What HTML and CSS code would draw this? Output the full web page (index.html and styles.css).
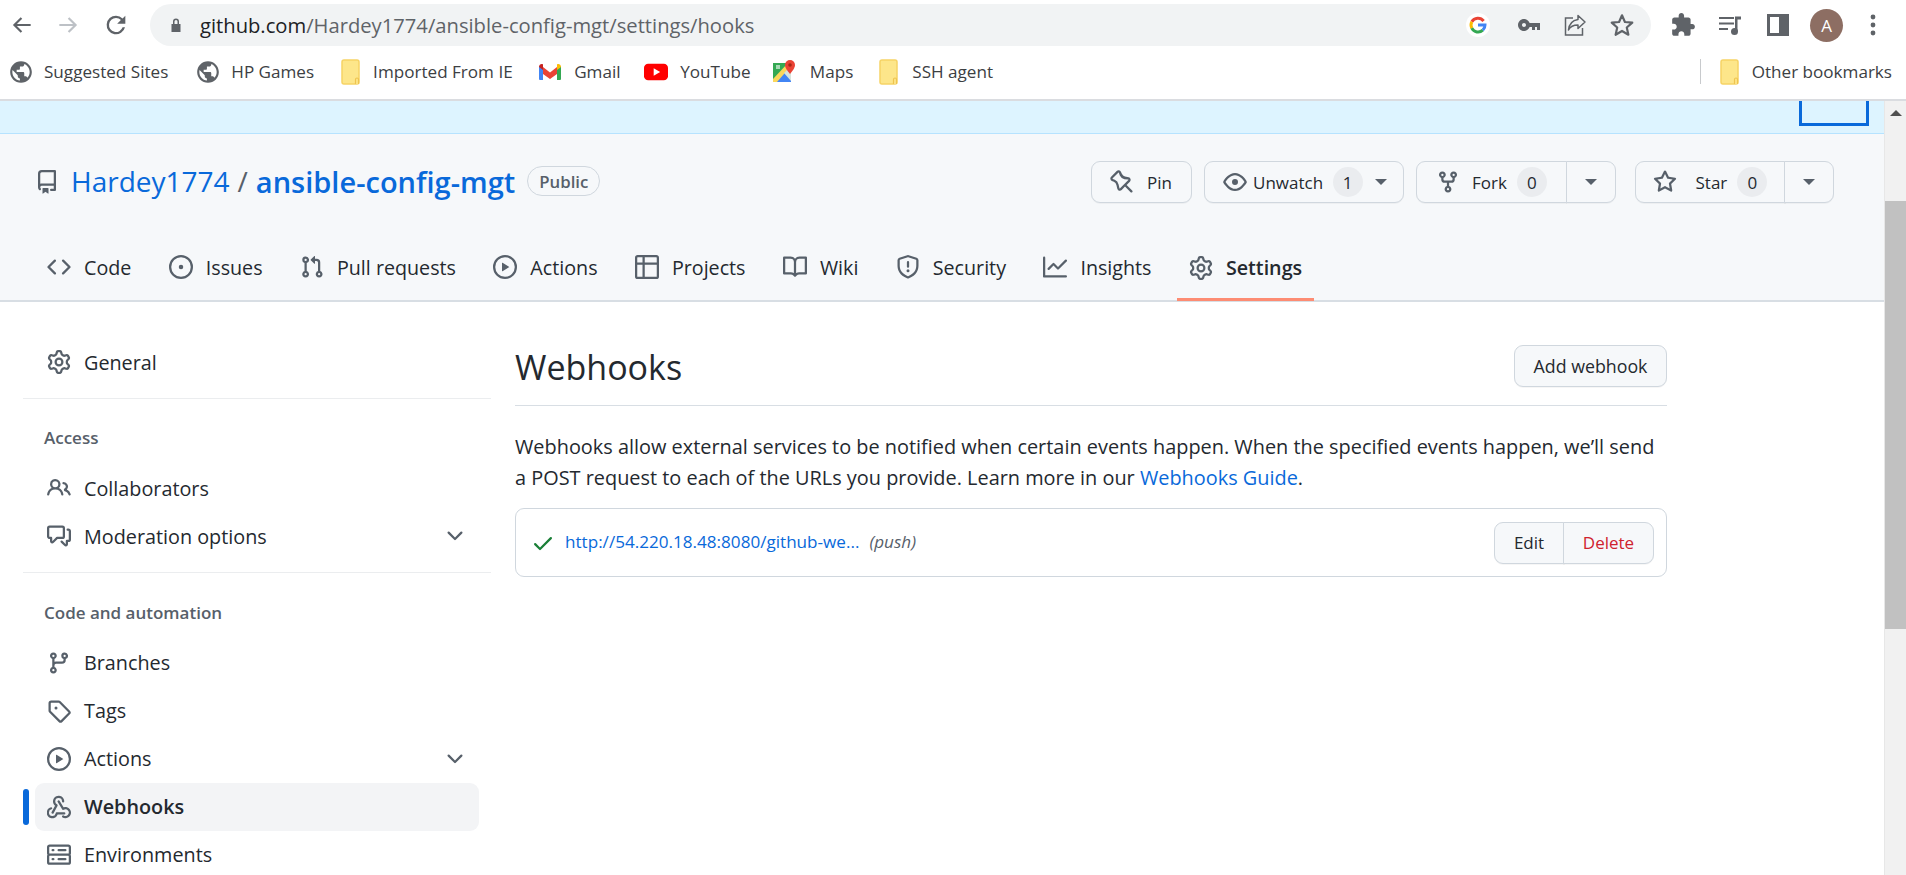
FILE: index.html
```html
<!DOCTYPE html>
<html lang="en">
<head>
  <meta charset="UTF-8">
  <title>Webhooks · Hardey1774/ansible-config-mgt</title>
  <link rel="stylesheet" href="styles.css">
</head>
<body>
  <svg class="sprite" xmlns="http://www.w3.org/2000/svg">
    <symbol id="i-repo" viewBox="0 0 16 16"><path d="M2 2.5A2.5 2.5 0 014.5 0h8.75a.75.75 0 01.75.75v12.5a.75.75 0 01-.75.75h-2.5a.75.75 0 110-1.5h1.75v-2h-8a1 1 0 00-.714 1.7.75.75 0 01-1.072 1.05A2.495 2.495 0 012 11.5v-9zm10.5-1V9h-8c-.356 0-.694.074-1 .208V2.5a1 1 0 011-1h8zM5 12.25v3.25a.25.25 0 00.4.2l1.45-1.087a.25.25 0 01.3 0L8.6 15.7a.25.25 0 00.4-.2v-3.25a.25.25 0 00-.25-.25h-3.5a.25.25 0 00-.25.25z"/></symbol>
    <symbol id="i-code" viewBox="0 0 16 16"><path d="M4.72 3.22a.75.75 0 011.06 1.06L2.06 8l3.72 3.72a.75.75 0 11-1.06 1.06L.47 8.53a.75.75 0 010-1.06l4.25-4.25zm6.56 0a.75.75 0 10-1.06 1.06L13.94 8l-3.72 3.72a.75.75 0 101.06 1.06l4.25-4.25a.75.75 0 000-1.06l-4.25-4.25z"/></symbol>
    <symbol id="i-issue" viewBox="0 0 16 16"><path d="M8 9.5a1.5 1.5 0 100-3 1.5 1.5 0 000 3z"/><path d="M8 0a8 8 0 100 16A8 8 0 008 0zM1.5 8a6.5 6.5 0 1113 0 6.5 6.5 0 01-13 0z"/></symbol>
    <symbol id="i-pull" viewBox="0 0 16 16"><path d="M7.177 3.073L9.573.677A.25.25 0 0110 .854v4.792a.25.25 0 01-.427.177L7.177 3.427a.25.25 0 010-.354zM3.75 2.5a.75.75 0 100 1.5.75.75 0 000-1.5zm-2.25.75a2.25 2.25 0 113 2.122v5.256a2.251 2.251 0 11-1.5 0V5.372A2.25 2.25 0 011.5 3.25zM11 2.5h-1V4h1a1 1 0 011 1v5.628a2.251 2.251 0 101.5 0V5A2.5 2.5 0 0011 2.5zm1 10.25a.75.75 0 111.5 0 .75.75 0 01-1.5 0zM3.75 12a.75.75 0 100 1.5.75.75 0 000-1.5z"/></symbol>
    <symbol id="i-play" viewBox="0 0 16 16"><path d="M1.5 8a6.5 6.5 0 1113 0 6.5 6.5 0 01-13 0zM8 0a8 8 0 100 16A8 8 0 008 0zM6.379 5.227A.25.25 0 006 5.442v5.117a.25.25 0 00.379.214l4.264-2.559a.25.25 0 000-.428L6.379 5.227z"/></symbol>
    <symbol id="i-table" viewBox="0 0 16 16"><path d="M0 1.75C0 .784.784 0 1.75 0h12.5C15.216 0 16 .784 16 1.75v12.5A1.75 1.75 0 0114.25 16H1.75A1.75 1.75 0 010 14.25V1.75zM1.5 6.5v7.75c0 .138.112.25.25.25H5v-8H1.5zM5 5H1.5V1.75a.25.25 0 01.25-.25H5V5zm1.5 1.5v8h7.75a.25.25 0 00.25-.25V6.5h-8zm8-1.5h-8V1.5h7.75a.25.25 0 01.25.25V5z"/></symbol>
    <symbol id="i-book" viewBox="0 0 16 16"><path d="M0 1.75A.75.75 0 01.75 1h4.253c1.227 0 2.317.59 3 1.501A3.744 3.744 0 0111.006 1h4.245a.75.75 0 01.75.75v10.5a.75.75 0 01-.75.75h-4.507a2.25 2.25 0 00-1.591.659l-.622.621a.75.75 0 01-1.06 0l-.622-.621A2.25 2.25 0 005.258 13H.75a.75.75 0 01-.75-.75V1.75zm8.755 3a2.25 2.25 0 012.25-2.25H14.5v9h-3.757c-.71 0-1.4.201-1.992.572l.004-7.322zm-1.504 7.324l.004-5.073-.002-2.253A2.25 2.25 0 005.003 2.5H1.5v9h3.757a3.75 3.75 0 011.994.574z"/></symbol>
    <symbol id="i-shield" viewBox="0 0 16 16"><path d="M7.467.133a1.75 1.75 0 011.066 0l5.25 1.68A1.75 1.75 0 0115 3.48V7c0 1.566-.32 3.182-1.303 4.682-.983 1.498-2.585 2.813-5.032 3.855a1.7 1.7 0 01-1.33 0c-2.447-1.042-4.049-2.357-5.032-3.855C1.32 10.182 1 8.566 1 7V3.48a1.75 1.75 0 011.217-1.667l5.25-1.68zm.61 1.429a.25.25 0 00-.153 0l-5.25 1.68a.25.25 0 00-.174.238V7c0 1.358.275 2.666 1.057 3.86.784 1.194 2.121 2.34 4.366 3.297a.2.2 0 00.154 0c2.245-.956 3.582-2.104 4.366-3.298C13.225 9.666 13.5 8.36 13.5 7V3.48a.25.25 0 00-.174-.237l-5.25-1.68zM9 10.5a1 1 0 11-2 0 1 1 0 012 0zm-.25-5.75a.75.75 0 10-1.5 0v3a.75.75 0 001.5 0v-3z"/></symbol>
    <symbol id="i-graph" viewBox="0 0 16 16"><path d="M1.5 1.75a.75.75 0 00-1.5 0v12.5c0 .414.336.75.75.75h14.5a.75.75 0 000-1.5H1.5V1.75zm14.28 2.53a.75.75 0 00-1.06-1.06L10 7.94 7.53 5.47a.75.75 0 00-1.06 0L3.22 8.72a.75.75 0 001.06 1.06L7 7.06l2.47 2.47a.75.75 0 001.06 0l5.25-5.25z"/></symbol>
    <symbol id="i-gear" viewBox="0 0 16 16"><path d="M7.429 1.525a6.593 6.593 0 011.142 0c.036.003.108.036.137.146l.289 1.105c.147.56.55.967.997 1.189.174.086.341.183.501.29.417.278.97.423 1.53.27l1.102-.303c.11-.03.175.016.195.046.219.31.41.641.573.989.014.031.022.11-.059.19l-.815.806c-.411.406-.562.957-.53 1.456a4.588 4.588 0 010 .582c-.032.499.119 1.05.53 1.456l.815.806c.08.08.073.159.059.19a6.494 6.494 0 01-.573.99c-.02.029-.086.074-.195.045l-1.103-.303c-.559-.153-1.112-.008-1.529.27-.16.107-.327.204-.5.29-.449.222-.851.628-.998 1.189l-.289 1.105c-.029.11-.101.143-.137.146a6.613 6.613 0 01-1.142 0c-.036-.003-.108-.037-.137-.146l-.289-1.105c-.147-.56-.55-.967-.997-1.189a4.502 4.502 0 01-.501-.29c-.417-.278-.97-.423-1.53-.27l-1.102.303c-.11.03-.175-.016-.195-.046a6.492 6.492 0 01-.573-.989c-.014-.031-.022-.11.059-.19l.815-.806c.411-.406.562-.957.53-1.456a4.587 4.587 0 010-.582c.032-.499-.119-1.05-.53-1.456l-.815-.806c-.08-.08-.073-.159-.059-.19a6.44 6.44 0 01.573-.99c.02-.029.086-.075.195-.045l1.103.303c.559.153 1.112.008 1.529-.27.16-.107.327-.204.5-.29.449-.222.851-.628.998-1.189l.289-1.105c.029-.11.101-.143.137-.146zM8 0c-.236 0-.47.01-.701.03-.743.065-1.29.615-1.458 1.261l-.29 1.106c-.017.066-.078.158-.211.224a5.994 5.994 0 00-.668.386c-.123.082-.233.09-.3.071L3.27 2.776c-.644-.177-1.392.02-1.82.63a7.977 7.977 0 00-.704 1.217c-.315.675-.111 1.422.363 1.891l.815.806c.05.048.098.147.088.294a6.084 6.084 0 000 .772c.01.147-.038.246-.088.294l-.815.806c-.474.469-.678 1.216-.363 1.891.2.428.436.835.704 1.218.428.609 1.176.806 1.82.63l1.103-.303c.066-.019.176-.011.299.071.213.143.436.272.668.386.133.066.194.158.212.224l.289 1.106c.169.646.715 1.196 1.458 1.26a8.094 8.094 0 001.402 0c.743-.064 1.29-.614 1.458-1.26l.29-1.106c.017-.066.078-.158.211-.224a5.98 5.98 0 00.668-.386c.123-.082.233-.09.3-.071l1.102.302c.644.177 1.392-.02 1.82-.63.268-.382.505-.789.704-1.217.315-.675.111-1.422-.364-1.891l-.814-.806c-.05-.048-.098-.147-.088-.294a6.1 6.1 0 000-.772c-.01-.147.039-.246.088-.294l.814-.806c.475-.469.679-1.216.364-1.891a7.992 7.992 0 00-.704-1.218c-.428-.609-1.176-.806-1.82-.63l-1.103.303c-.066.019-.176.011-.299-.071a5.991 5.991 0 00-.668-.386c-.133-.066-.194-.158-.212-.224L10.16 1.29C9.99.645 9.444.095 8.701.031A8.094 8.094 0 008 0zm1.5 8a1.5 1.5 0 11-3 0 1.5 1.5 0 013 0zM11 8a3 3 0 11-6 0 3 3 0 016 0z"/></symbol>
    <symbol id="i-pin" viewBox="0 0 16 16"><path d="M4.456.734a1.75 1.75 0 012.826.504l.613 1.327a3.081 3.081 0 002.084 1.707l2.454.584c1.332.317 1.8 1.972.832 2.94L11.06 10l3.72 3.72a.75.75 0 11-1.061 1.06L10 11.06l-2.204 2.205c-.968.968-2.623.5-2.94-.832l-.584-2.454a3.081 3.081 0 00-1.707-2.084l-1.327-.613a1.75 1.75 0 01-.504-2.826L4.456.734zM5.92 1.866a.25.25 0 00-.404-.072L1.794 5.516a.25.25 0 00.072.404l1.328.613A4.582 4.582 0 015.73 9.63l.584 2.454a.25.25 0 00.42.12l5.47-5.47a.25.25 0 00-.12-.42L9.63 6.13a4.581 4.581 0 01-3.098-2.537L5.92 1.866z"/></symbol>
    <symbol id="i-eye" viewBox="0 0 16 16"><path d="M1.679 7.932c.412-.621 1.242-1.75 2.366-2.717C5.175 4.242 6.527 3.5 8 3.5c1.473 0 2.824.742 3.955 1.715 1.124.967 1.954 2.096 2.366 2.717a.119.119 0 010 .136c-.412.621-1.242 1.75-2.366 2.717C10.825 11.758 9.473 12.5 8 12.5c-1.473 0-2.824-.742-3.955-1.715C2.92 9.818 2.09 8.69 1.679 8.068a.119.119 0 010-.136zM8 2c-1.981 0-3.67.992-4.933 2.078C1.797 5.169.88 6.423.43 7.1a1.619 1.619 0 000 1.798c.45.678 1.367 1.932 2.637 3.024C4.329 13.008 6.019 14 8 14c1.981 0 3.67-.992 4.933-2.078 1.27-1.091 2.187-2.345 2.637-3.023a1.619 1.619 0 000-1.798c-.45-.678-1.367-1.932-2.637-3.023C11.671 2.992 9.981 2 8 2zm0 8a2 2 0 100-4 2 2 0 000 4z"/></symbol>
    <symbol id="i-fork" viewBox="0 0 16 16"><path d="M5 3.25a.75.75 0 11-1.5 0 .75.75 0 011.5 0zm0 2.122a2.25 2.25 0 10-1.5 0v.878A2.25 2.25 0 005.75 8.5h1.5v2.128a2.251 2.251 0 101.5 0V8.5h1.5a2.25 2.25 0 002.25-2.25v-.878a2.25 2.25 0 10-1.5 0v.878a.75.75 0 01-.75.75h-4.5A.75.75 0 015 6.25v-.878zm3.75 7.378a.75.75 0 11-1.5 0 .75.75 0 011.5 0zm3-8.75a.75.75 0 100-1.5.75.75 0 000 1.5z"/></symbol>
    <symbol id="i-star" viewBox="0 0 16 16"><path d="M8 .25a.75.75 0 01.673.418l1.882 3.815 4.21.612a.75.75 0 01.416 1.279l-3.046 2.97.719 4.192a.75.75 0 01-1.088.791L8 12.347l-3.766 1.98a.75.75 0 01-1.088-.79l.72-4.194L.818 6.374a.75.75 0 01.416-1.28l4.21-.611L7.327.668A.75.75 0 018 .25zm0 2.445L6.615 5.5a.75.75 0 01-.564.41l-3.097.45 2.24 2.184a.75.75 0 01.216.664l-.528 3.084 2.769-1.456a.75.75 0 01.698 0l2.77 1.456-.53-3.084a.75.75 0 01.216-.664l2.24-2.183-3.096-.45a.75.75 0 01-.564-.41L8 2.694v.001z"/></symbol>
    <symbol id="i-people" viewBox="0 0 16 16"><path d="M5.5 3.5a2 2 0 100 4 2 2 0 000-4zM2 5.5a3.5 3.5 0 115.898 2.549 5.507 5.507 0 013.034 4.084.75.75 0 11-1.482.235 4.001 4.001 0 00-7.9 0 .75.75 0 01-1.482-.236A5.507 5.507 0 013.102 8.05 3.49 3.49 0 012 5.5zM11 4a.75.75 0 100 1.5 1.5 1.5 0 01.666 2.844.75.75 0 00-.416.672v.352a.75.75 0 00.574.73c1.2.289 2.162 1.2 2.522 2.372a.75.75 0 101.434-.44 5.01 5.01 0 00-2.56-3.012A3 3 0 0011 4z"/></symbol>
    <symbol id="i-comment" viewBox="0 0 16 16"><path d="M1.5 2.75a.25.25 0 01.25-.25h8.5a.25.25 0 01.25.25v5.5a.25.25 0 01-.25.25h-3.5a.75.75 0 00-.53.22L3.5 11.44V9.25a.75.75 0 00-.75-.75h-1a.25.25 0 01-.25-.25v-5.5zM1.75 1A1.75 1.75 0 000 2.75v5.5C0 9.216.784 10 1.75 10H2v1.543a1.457 1.457 0 002.487 1.03L7.061 10h3.189A1.75 1.75 0 0012 8.25v-5.5A1.75 1.75 0 0010.25 1h-8.5zM14.5 4.75a.25.25 0 00-.25-.25h-.5a.75.75 0 110-1.5h.5c.966 0 1.75.784 1.75 1.75v5.5A1.75 1.75 0 0114.25 12H14v1.543a1.457 1.457 0 01-2.487 1.03L9.22 12.28a.75.75 0 111.06-1.06l2.22 2.22v-2.19a.75.75 0 01.75-.75h1a.25.25 0 00.25-.25v-5.5z"/></symbol>
    <symbol id="i-branch" viewBox="0 0 16 16"><path d="M9.5 3.25a2.25 2.25 0 113 2.122V6A2.5 2.5 0 0110 8.5H6a1 1 0 00-1 1v1.128a2.251 2.251 0 11-1.5 0V5.372a2.25 2.25 0 111.5 0v1.836A2.492 2.492 0 016 7h4a1 1 0 001-1v-.628A2.25 2.25 0 019.5 3.25zm-6 0a.75.75 0 101.5 0 .75.75 0 00-1.5 0zm8.25-.75a.75.75 0 100 1.5.75.75 0 000-1.5zM4.25 12a.75.75 0 100 1.5.75.75 0 000-1.5z"/></symbol>
    <symbol id="i-tag" viewBox="0 0 16 16"><path d="M2.5 7.775V2.75a.25.25 0 01.25-.25h5.025a.25.25 0 01.177.073l6.25 6.25a.25.25 0 010 .354l-5.025 5.025a.25.25 0 01-.354 0l-6.25-6.25a.25.25 0 01-.073-.177zm-1.5 0V2.75C1 1.784 1.784 1 2.75 1h5.025c.464 0 .91.184 1.238.513l6.25 6.25a1.75 1.75 0 010 2.474l-5.026 5.026a1.75 1.75 0 01-2.474 0l-6.25-6.25A1.75 1.75 0 011 7.775zM6 5a1 1 0 100 2 1 1 0 000-2z"/></symbol>
    <symbol id="i-webhook" viewBox="0 0 16 16"><path d="M5.5 4.25a2.25 2.25 0 1 1 4.5 0 .75.75 0 0 0 1.5 0 3.75 3.75 0 1 0-6.14 2.889l-2.272 4.258a.75.75 0 0 0 1.324.706L7 7.25a.75.75 0 0 0-.309-1.015A2.25 2.25 0 0 1 5.5 4.25Z"/><path d="M7.364 3.607a.75.75 0 0 1 1.03.257l2.608 4.349a3.75 3.75 0 1 1-.628 6.785.75.75 0 0 1 .752-1.299 2.25 2.25 0 1 0-.033-3.88.75.75 0 0 1-1.03-.256L7.107 4.636a.75.75 0 0 1 .257-1.03Z"/><path d="M2.75 8.1a.75.75 0 0 1 .2 1.47 2.25 2.25 0 1 0 2.8 2.68.75.75 0 0 1 .75-.75h5a.75.75 0 0 1 0 1.5H7.1A3.75 3.75 0 1 1 2.75 8.1Z"/></symbol>
    <symbol id="i-server" viewBox="0 0 16 16"><path d="M1.75 1h12.5c.966 0 1.75.784 1.75 1.75v4c0 .372-.116.717-.314 1 .198.283.314.628.314 1v4a1.75 1.75 0 01-1.75 1.75H1.75A1.75 1.75 0 010 12.75v-4c0-.372.116-.717.314-1A1.739 1.739 0 010 6.75v-4C0 1.784.784 1 1.75 1zM1.5 2.75v4c0 .138.112.25.25.25h12.5a.25.25 0 00.25-.25v-4a.25.25 0 00-.25-.25H1.75a.25.25 0 00-.25.25zm.25 5.75a.25.25 0 00-.25.25v4c0 .138.112.25.25.25h12.5a.25.25 0 00.25-.25v-4a.25.25 0 00-.25-.25H1.75zM7 4.75A.75.75 0 017.75 4h4.5a.75.75 0 010 1.5h-4.5A.75.75 0 017 4.75zM7.75 10h4.5a.75.75 0 010 1.5h-4.5a.75.75 0 010-1.5zM3 4.75A.75.75 0 013.75 4h.5a.75.75 0 010 1.5h-.5A.75.75 0 013 4.75zM3.75 10h.5a.75.75 0 010 1.5h-.5a.75.75 0 010-1.5z"/></symbol>
    <symbol id="i-check" viewBox="0 0 16 16"><path d="M13.78 4.22a.75.75 0 010 1.06l-7.25 7.25a.75.75 0 01-1.06 0L2.22 9.28a.75.75 0 011.06-1.06L6 10.94l6.72-6.72a.75.75 0 011.06 0z"/></symbol>
    <symbol id="i-chevron" viewBox="0 0 16 16"><path d="M12.78 5.22a.749.749 0 0 1 0 1.06l-4.25 4.25a.749.749 0 0 1-1.06 0L3.22 6.28a.749.749 0 1 1 1.06-1.06L8 8.939l3.72-3.719a.749.749 0 0 1 1.06 0Z"/></symbol>
    <symbol id="i-globe" viewBox="0 0 24 24"><path d="M12 2C6.48 2 2 6.48 2 12s4.48 10 10 10 10-4.48 10-10S17.52 2 12 2zm-1 17.93c-3.95-.49-7-3.85-7-7.93 0-.62.08-1.21.21-1.79L9 15v1c0 1.1.9 2 2 2v1.93zm6.9-2.54c-.26-.81-1-1.39-1.9-1.39h-1v-3c0-.55-.45-1-1-1H8v-2h2c.55 0 1-.45 1-1V7h2c1.1 0 2-.9 2-2v-.41c2.93 1.19 5 4.06 5 7.41 0 2.08-.8 3.97-2.1 5.39z"/></symbol>
    <symbol id="i-folder" viewBox="0 0 20 26"><rect x="1" y="1" width="17" height="24" rx="2" fill="#fde68a" stroke="#f6d365" stroke-width="1.5"/><path d="M14.5 25v-4.5a1.5 1.5 0 0 1 3 0V25" fill="#fde68a" stroke="#eec44f" stroke-width="1.2"/></symbol>
  </svg>

  <header class="toolbar">
    <svg class="tool tool-back" viewBox="0 0 24 24"><path d="M20 12H5M11.5 5.5L5 12l6.5 6.5" fill="none" stroke="#5f6368" stroke-width="2"/></svg>
    <svg class="tool tool-forward" viewBox="0 0 24 24"><path d="M4 12h15M12.5 5.5L19 12l-6.5 6.5" fill="none" stroke="#bdc1c6" stroke-width="2"/></svg>
    <svg class="tool tool-reload" viewBox="0 0 24 24"><path d="M17.65 6.35A7.96 7.96 0 0 0 12 4a8 8 0 1 0 7.73 10h-2.08A6 6 0 1 1 12 6c1.66 0 3.14.69 4.22 1.78L13 11h7V4l-2.35 2.35z" fill="#5f6368"/></svg>
    <div class="omnibox">
      <svg class="lock" viewBox="0 0 12 16"><path d="M3 7V4.5a3 3 0 0 1 6 0V7h1.5v8h-9V7H3zm1.5 0h3V4.5a1.5 1.5 0 0 0-3 0V7z" fill="#5f6368"/></svg>
      <span class="omni-url"><b>github.com</b>/Hardey1774/ansible-config-mgt/settings/hooks</span>
      <svg class="omni-google" viewBox="0 0 24 24">
        <circle cx="12" cy="12" r="12" fill="#fff"/>
        <path d="M17.6 8A7 7 0 0 0 5.8 8.8" fill="none" stroke="#ea4335" stroke-width="3"/>
        <path d="M5.8 8.8a7 7 0 0 0 0 6.4" fill="none" stroke="#fbbc05" stroke-width="3"/>
        <path d="M5.8 15.2a7 7 0 0 0 11 2" fill="none" stroke="#34a853" stroke-width="3"/>
        <path d="M12 12h7a7 7 0 0 1-2.2 5.2" fill="none" stroke="#4285f4" stroke-width="3"/>
      </svg>
      <svg class="omni-icon key" viewBox="0 0 24 24"><path d="M12.65 10C11.83 7.67 9.61 6 7 6c-3.31 0-6 2.69-6 6s2.69 6 6 6c2.61 0 4.83-1.67 5.65-4H15v3h3v-3h2v3h3v-7H12.65zM7 14c-1.1 0-2-.9-2-2s.9-2 2-2 2 .9 2 2-.9 2-2 2z" fill="#5f6368"/></svg>
      <svg class="omni-icon share" viewBox="0 0 24 24"><path d="M10 5H2.5v17h17v-7" fill="none" stroke="#5f6368" stroke-width="1.5"/><path d="M15 2.5l7 6.5-7 6.5V12c-4.5 0-7.500 1-9.500 5 .5-5.500 3.500-9.500 9.500-10.500V2.500z" fill="none" stroke="#5f6368" stroke-width="1.5" stroke-linejoin="round"/></svg>
      <svg class="omni-icon star-outline" viewBox="0 0 24 24"><path d="M12 3l2.700 6.200 6.800.6-5.100 4.500 1.500 6.700L12 17.500 6.100 21l1.500-6.700L2.500 9.800l6.800-.6L12 3z" fill="none" stroke="#5f6368" stroke-width="2" stroke-linejoin="round"/></svg>
    </div>
    <svg class="tool tool-puzzle" viewBox="0 0 24 24"><path d="M20.5 11H19V7c0-1.100-.9-2-2-2h-4V3.500C13 2.120 11.880 1 10.500 1S8 2.120 8 3.500V5H4c-1.100 0-1.990.9-1.990 2v3.800H3.500c1.490 0 2.700 1.210 2.700 2.700s-1.210 2.700-2.700 2.700H2V20c0 1.100.9 2 2 2h3.800v-1.500c0-1.490 1.210-2.700 2.700-2.700 1.490 0 2.700 1.210 2.700 2.700V22H17c1.100 0 2-.9 2-2v-4h1.500c1.380 0 2.500-1.120 2.500-2.500S21.880 11 20.500 11z" fill="#5f6368"/></svg>
    <svg class="tool tool-media" viewBox="0 0 24 24"><path d="M1 5h15M1 10.500h15M1 16h9" fill="none" stroke="#5f6368" stroke-width="2"/><path d="M17 18.500V3.500h6v3h-3.500v12" fill="#5f6368"/><circle cx="16.500" cy="18.500" r="3.500" fill="#5f6368"/></svg>
    <svg class="tool tool-panel" viewBox="0 0 22 22"><path d="M0 0h22v22H0V0zm3 3v16h9V3H3z" fill="#5f6368" fill-rule="evenodd"/></svg>
    <div class="avatar">A</div>
    <svg class="tool tool-dots" viewBox="0 0 6 24"><circle cx="3" cy="4" r="2.4" fill="#5f6368"/><circle cx="3" cy="12" r="2.4" fill="#5f6368"/><circle cx="3" cy="20" r="2.4" fill="#5f6368"/></svg>
  </header>

  <nav class="bookmarks">
    <a class="mark mark-sites"><svg class="mark-icon"><use href="#i-globe"/></svg>Suggested Sites</a>
    <a class="mark mark-hp"><svg class="mark-icon"><use href="#i-globe"/></svg>HP Games</a>
    <a class="mark mark-ie"><svg class="mark-folder"><use href="#i-folder"/></svg>Imported From IE</a>
    <a class="mark mark-gmail">
      <svg class="mark-logo" viewBox="0 0 24 18">
        <path d="M1 17V3l4 3v11H2a1 1 0 0 1-1-1z" fill="#4285f4"/>
        <path d="M23 17V3l-4 3v11h3a1 1 0 0 0 1-1z" fill="#34a853"/>
        <path d="M5 11V4l7 5.500L19 4v7l-7 5-7-5z" fill="#ea4335"/>
        <path d="M1 4c0-2.500 2.500-3.500 4-2.500V7L1 4z" fill="#c5221f"/>
        <path d="M23 4c0-2.500-2.500-3.500-4-2.500V7l4-3z" fill="#fbbc04"/>
      </svg>Gmail</a>
    <a class="mark mark-yt">
      <svg class="mark-logo" viewBox="0 0 26 18"><rect width="26" height="18" rx="4.5" fill="#f00"/><path d="M10.5 5v8l7-4-7-4z" fill="#fff"/></svg>YouTube</a>
    <a class="mark mark-maps">
      <svg class="mark-logo" viewBox="0 0 24 24">
        <path d="M1 3h18v19H1V3z" fill="#34a853"/>
        <path d="M1 22L14 9l5 5v8H1z" fill="#4285f4"/>
        <path d="M1 22v-3L16 3h3v3L5 22H1z" fill="#fbd75b"/>
        <path d="M12 13l7-7v15l-7-8z" fill="#d6e4dc"/>
        <path d="M4 5h4v4H4V5z" fill="#a8dab5"/>
        <path d="M18 0a5 5 0 0 0-5 5c0 3.500 5 9 5 9s5-5.500 5-9a5 5 0 0 0-5-5z" fill="#ea4335"/>
        <circle cx="18" cy="5" r="1.800" fill="#a52714"/>
      </svg>Maps</a>
    <a class="mark mark-ssh"><svg class="mark-folder"><use href="#i-folder"/></svg>SSH agent</a>
    <span class="marks-sep"></span>
    <a class="mark mark-other"><svg class="mark-folder"><use href="#i-folder"/></svg>Other bookmarks</a>
  </nav>

  <div class="viewport">
    <div class="page">
      <div class="banner"><span class="banner-focus"></span></div>

      <section class="repohead">
        <div class="repo-row">
          <svg class="icon repo-icon"><use href="#i-repo"/></svg>
          <a class="repo-owner">Hardey1774</a>
          <span class="repo-slash">/</span>
          <a class="repo-name">ansible-config-mgt</a>
          <span class="repo-public">Public</span>
          <div class="repo-actions">
            <button class="btn btn-pin"><svg class="icon"><use href="#i-pin"/></svg>Pin</button>
            <button class="btn btn-watch"><svg class="icon"><use href="#i-eye"/></svg>Unwatch<span class="counter">1</span><span class="caret"></span></button>
            <div class="btn-pair">
              <button class="btn btn-main"><svg class="icon"><use href="#i-fork"/></svg>Fork<span class="counter">0</span></button>
              <button class="btn btn-drop"><span class="caret"></span></button>
            </div>
            <div class="btn-pair btn-pair-star">
              <button class="btn btn-main"><svg class="icon"><use href="#i-star"/></svg>Star<span class="counter">0</span></button>
              <button class="btn btn-drop"><span class="caret"></span></button>
            </div>
          </div>
        </div>
        <nav class="tabs">
          <a class="tab"><svg class="icon"><use href="#i-code"/></svg>Code</a>
          <a class="tab"><svg class="icon"><use href="#i-issue"/></svg>Issues</a>
          <a class="tab"><svg class="icon"><use href="#i-pull"/></svg>Pull requests</a>
          <a class="tab"><svg class="icon"><use href="#i-play"/></svg>Actions</a>
          <a class="tab"><svg class="icon"><use href="#i-table"/></svg>Projects</a>
          <a class="tab"><svg class="icon"><use href="#i-book"/></svg>Wiki</a>
          <a class="tab"><svg class="icon"><use href="#i-shield"/></svg>Security</a>
          <a class="tab"><svg class="icon"><use href="#i-graph"/></svg>Insights</a>
          <a class="tab tab-active"><svg class="icon"><use href="#i-gear"/></svg>Settings</a>
        </nav>
      </section>

      <div class="settings">
        <aside class="sidebar">
          <a class="side-item"><svg class="icon"><use href="#i-gear"/></svg>General</a>
          <hr class="side-rule">
          <h3 class="side-label">Access</h3>
          <a class="side-item"><svg class="icon"><use href="#i-people"/></svg>Collaborators</a>
          <a class="side-item"><svg class="icon"><use href="#i-comment"/></svg>Moderation options<svg class="icon side-chevron"><use href="#i-chevron"/></svg></a>
          <hr class="side-rule">
          <h3 class="side-label">Code and automation</h3>
          <a class="side-item"><svg class="icon"><use href="#i-branch"/></svg>Branches</a>
          <a class="side-item"><svg class="icon"><use href="#i-tag"/></svg>Tags</a>
          <a class="side-item"><svg class="icon"><use href="#i-play"/></svg>Actions<svg class="icon side-chevron"><use href="#i-chevron"/></svg></a>
          <a class="side-item side-current"><svg class="icon"><use href="#i-webhook"/></svg>Webhooks</a>
          <a class="side-item"><svg class="icon"><use href="#i-server"/></svg>Environments</a>
        </aside>

        <main class="content">
          <div class="content-head">
            <h2>Webhooks</h2>
            <button class="btn btn-add">Add webhook</button>
          </div>
          <p class="intro">Webhooks allow external services to be notified when certain events happen. When the specified events happen, we’ll send a POST request to each of the URLs you provide. Learn more in our <a>Webhooks Guide</a>.</p>
          <div class="hook">
            <svg class="icon hook-check"><use href="#i-check"/></svg>
            <a class="hook-url">http://54.220.18.48:8080/github-we...</a>
            <em class="hook-events">(push)</em>
            <div class="hook-btns">
              <button class="btn btn-edit">Edit</button>
              <button class="btn btn-delete">Delete</button>
            </div>
          </div>
        </main>
      </div>
    </div>

    <div class="scrollbar">
      <div class="scroll-up"></div>
      <div class="scroll-thumb"></div>
    </div>
  </div>
</body>
</html>
```

FILE: styles.css
```css
* { box-sizing: border-box; }
html, body { margin: 0; height: 875px; overflow: hidden; }
body {
  font-family: "Open Sans", "Noto Sans", sans-serif;
  color: #24292f;
  background: #fff;
  display: flex;
  flex-direction: column;
}
.sprite { display: none; }
.icon { width: 24px; height: 24px; fill: #57606a; fill-rule: evenodd; flex: none; }
a { color: inherit; text-decoration: none; }
button { font-family: inherit; }

/* browser top bar */
.toolbar { height: 50px; display: flex; align-items: center; flex: none; }
.tool { flex: none; }
.tool-back { width: 26px; height: 26px; margin-left: 9px; }
.tool-forward { width: 26px; height: 26px; margin-left: 20px; }
.tool-reload { width: 28px; height: 28px; margin-left: 21px; }
.omnibox {
  width: 1501px;
  height: 42px;
  margin-left: 20px;
  background: #f1f3f4;
  border-radius: 21px;
  display: flex;
  align-items: center;
  padding-left: 20px;
}
.lock { width: 12px; height: 16px; flex: none; }
.omni-url { margin-left: 18px; font-size: 20.2px; color: #5f6368; white-space: nowrap; }
.omni-url b { font-weight: 400; color: #202124; }
.omni-google { width: 24px; height: 24px; margin-left: auto; flex: none; }
.omni-icon { flex: none; }
.key { width: 24px; height: 24px; margin-left: 27px; }
.share { width: 24px; height: 24px; margin-left: 22px; }
.star-outline { width: 26px; height: 26px; margin-left: 22px; margin-right: 16px; }
.tool-puzzle { width: 26px; height: 26px; margin-left: 19px; }
.tool-media { width: 24px; height: 24px; margin-left: 22px; }
.tool-panel { width: 22px; height: 22px; margin-left: 25px; }
.avatar {
  width: 33px;
  height: 33px;
  margin-left: 21px;
  border-radius: 50%;
  background: #8d6e63;
  color: #fff;
  font-size: 17px;
  display: flex;
  align-items: center;
  justify-content: center;
  flex: none;
}
.tool-dots { width: 6px; height: 24px; margin-left: 27px; }

.bookmarks {
  height: 51px;
  flex: none;
  display: flex;
  align-items: center;
  padding-bottom: 6px;
  font-size: 17.1px;
  color: #3c4043;
  border-bottom: 2px solid #dadce0;
  white-space: nowrap;
}
.mark { display: flex; align-items: center; }
.mark-icon { width: 26px; height: 26px; fill: #5f6368; margin-right: 10px; flex: none; }
.mark-folder { width: 20px; height: 26px; margin-right: 12px; flex: none; }
.mark-logo { width: 24px; height: 20px; margin-right: 12px; flex: none; }
.mark-sites { margin-left: 8px; }
.mark-hp { margin-left: 27px; }
.mark-ie { margin-left: 27px; }
.mark-gmail { margin-left: 25.5px; }
.mark-yt { margin-left: 23.7px; }
.mark-maps { margin-left: 21.3px; }
.mark-maps .mark-logo { height: 24px; margin-right: 14px; }
.mark-ssh { margin-left: 26px; }
.mark-ssh .mark-folder { margin-right: 13px; }
.marks-sep { width: 1px; height: 25px; background: #c8cacd; margin-left: auto; }
.mark-other { margin-left: 19px; margin-right: 14px; }

/* page area */
.viewport { flex: 1; display: flex; min-height: 0; }
.page { flex: 1; min-width: 0; }
.scrollbar { width: 22px; flex: none; background: #f1f1f1; border-left: 1px solid #e7e7e7; }
.scroll-up {
  width: 0;
  height: 0;
  margin: 9px auto 0;
  border-left: 6px solid transparent;
  border-right: 6px solid transparent;
  border-bottom: 6px solid #505050;
}
.scroll-thumb { height: 428px; margin-top: 85px; background: #c1c1c1; }

.banner {
  height: 33px;
  background: #ddf4ff;
  border-bottom: 1px solid #b6e3ff;
  position: relative;
}
.banner-focus {
  position: absolute;
  left: 1799px;
  top: 0;
  width: 70px;
  height: 25px;
  border: 3px solid #0969da;
  border-top: 0;
}

.repohead { background: #f6f8fa; border-bottom: 2px solid #d8dee4; height: 168px; }
.repo-row { height: 96px; display: flex; align-items: center; padding: 0 50px 0 35px; white-space: nowrap; }
.repo-icon { margin-right: 12px; }
.repo-owner { font-size: 28px; color: #0969da; margin-bottom: 2px; }
.repo-slash { font-size: 28px; color: #57606a; margin: 0 8px 2px; }
.repo-name { font-size: 29px; font-weight: 600; color: #0969da; margin-bottom: 2px; }
.repo-public {
  margin: 0 0 2px 12px;
  height: 30px;
  padding: 0 11px;
  border: 1.5px solid #d0d7de;
  border-radius: 15px;
  font-size: 16.8px;
  font-weight: 600;
  color: #57606a;
  display: flex;
  align-items: center;
}
.repo-actions { margin-left: auto; display: flex; align-items: center; }

.btn {
  height: 42px;
  display: inline-flex;
  align-items: center;
  background: #f6f8fa;
  border: 1.5px solid #d0d7de;
  border-radius: 9px;
  font-size: 17px;
  font-weight: 500;
  color: #24292f;
  padding: 0 16px;
  white-space: nowrap;
  box-shadow: 0 1px 0 rgba(27, 31, 36, .04);
}
.counter {
  min-width: 30px;
  height: 30px;
  border-radius: 15px;
  background: #eaecef;
  font-size: 17px;
  display: inline-flex;
  align-items: center;
  justify-content: center;
  margin-left: 8px;
}
.caret {
  width: 0;
  height: 0;
  border-left: 6px solid transparent;
  border-right: 6px solid transparent;
  border-top: 6px solid #57606a;
}
.btn-pin { width: 101px; gap: 13px; padding: 0 0 0 18px; }
.btn-watch { width: 200px; margin-left: 12px; padding: 0 0 0 18px; }
.btn-watch .icon { margin-right: 6px; }
.btn-watch .counter { margin-left: 9.5px; }
.btn-watch .caret { margin-left: 12px; }
.btn-pair { display: flex; margin-left: 12px; }
.btn-pair-star { margin-left: 19px; }
.btn-main { width: 151px; border-radius: 9px 0 0 9px; padding: 0 0 0 19px; gap: 12px; }
.btn-main .counter { margin-left: -2px; }
.btn-pair-star .btn-main { padding-left: 17px; gap: 19px; }
.btn-pair-star .counter { margin-left: -9px; }
.btn-drop { width: 50px; margin-left: -1.5px; border-radius: 0 9px 9px 0; justify-content: center; padding: 0; }

.tabs { height: 70px; display: flex; gap: 13.4px; padding-left: 35px; }
.tab {
  height: 70px;
  padding: 7px 12px 0;
  display: flex;
  align-items: center;
  gap: 13px;
  font-size: 19.7px;
  white-space: nowrap;
  border-bottom: 3px solid transparent;
}
.tab-active { font-weight: 600; border-bottom-color: #fd8c73; height: 71px; }

.settings { display: flex; padding: 36px 0 0 23px; }

.sidebar { width: 468px; flex: none; }
.side-item {
  height: 48px;
  margin-left: 12px;
  margin-right: 12px;
  padding: 0 12px;
  border-radius: 9px;
  display: flex;
  align-items: center;
  gap: 13px;
  font-size: 19.8px;
  position: relative;
  white-space: nowrap;
}
.side-chevron { margin-left: auto; }
.side-current { background: #f3f4f6; font-weight: 600; }
.side-current::before {
  content: "";
  position: absolute;
  left: -12px;
  top: 6px;
  width: 6px;
  height: 36px;
  border-radius: 3px;
  background: #0969da;
}
.side-rule { border: 0; border-top: 1.5px solid #ebedef; margin: 12px 0 0; }
.side-label {
  margin: 0 0 0 21px;
  height: 65.4px;
  padding-top: 12px;
  display: flex;
  align-items: center;
  font-size: 17px;
  font-weight: 600;
  color: #57606a;
}

.content { width: 1152px; margin-left: 24px; }
.content-head {
  height: 61px;
  display: flex;
  justify-content: space-between;
  align-items: flex-start;
  margin-top: 7px;
  border-bottom: 1.5px solid #d8dee4;
}
.content-head h2 { margin: 0; font-size: 34px; font-weight: 400; line-height: 44px; }
.btn-add { width: 153px; justify-content: center; padding: 0; font-size: 17.8px; }
.intro { margin: 25px 0 0; font-size: 19.9px; line-height: 31px; }
.intro a { color: #0969da; }
.hook {
  height: 69px;
  margin-top: 15px;
  border: 1.5px solid #d0d7de;
  border-radius: 9px;
  display: flex;
  align-items: center;
  padding: 0 12px 0 15px;
}
.hook-check { fill: #1a7f37; }
.hook-url { margin: 0 0 2px 10px; font-size: 17.1px; color: #0969da; white-space: nowrap; }
.hook-events { margin: 0 0 2px 10px; font-size: 17.1px; color: #57606a; }
.hook-btns { margin-left: auto; display: flex; }
.btn-edit { width: 71px; justify-content: center; padding: 0; border-radius: 9px 0 0 9px; }
.btn-delete { width: 91px; margin-left: -1.5px; justify-content: center; padding: 0; border-radius: 0 9px 9px 0; color: #cf222e; }
```
